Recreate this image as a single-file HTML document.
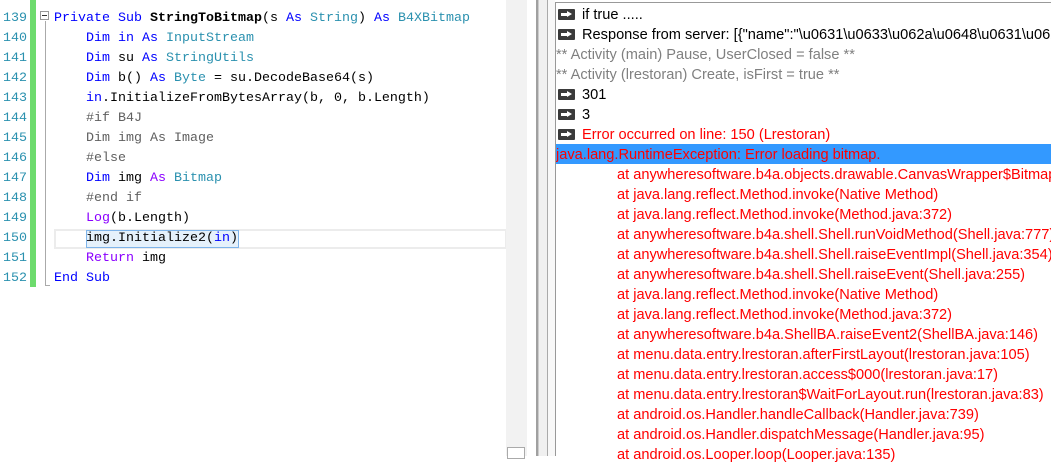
<!DOCTYPE html>
<html><head><style>
body{margin:0;width:1051px;height:456px;overflow:hidden;background:#fff;position:relative}
.ab{position:absolute}
.code{font-family:"Liberation Mono",monospace;font-size:13.33px;white-space:pre}
.ln{position:absolute;left:0;width:27px;text-align:right;color:#2b91af;font-family:"Liberation Mono",monospace;font-size:13.33px;line-height:20px}
.cl{position:absolute;left:54px;line-height:20px;color:#000}
.k{color:#0000ff}.t{color:#2b91af}.p{color:#8a00ff}.g{color:#606060}
.log{position:absolute;left:556px;right:0;font-family:"Liberation Sans",sans-serif;font-size:14.6px;line-height:20px;white-space:nowrap;overflow:hidden}
.lr{height:20px;position:relative;padding-top:1px;box-sizing:border-box}
.ic{position:absolute;left:2px;top:5px;width:17px;height:11px;background:#3a3a3a;border-radius:1px}
.ic:after{content:"";position:absolute;left:3px;top:4px;width:7px;height:3px;background:#fff}
.ic:before{content:"";position:absolute;left:9px;top:2px;border-left:5px solid #fff;border-top:3.5px solid transparent;border-bottom:3.5px solid transparent}
.tx{position:absolute;left:26px}
.red{color:#f00}.gr{color:#808080}
.st{position:absolute;left:61px;color:#f00}
</style></head><body>
<div class="ab" style="left:30px;top:0;width:6px;height:287px;background:#6ddb6d"></div>
<div class="ab" style="left:40px;top:11px;width:9px;height:9px;border:1px solid #999;box-sizing:border-box"></div>
<div class="ab" style="left:42px;top:15px;width:5px;height:1px;background:#333"></div>
<div class="ab" style="left:45px;top:21px;width:1px;height:265px;background:#aaa"></div>
<div class="ab" style="left:45px;top:285px;width:5px;height:1px;background:#aaa"></div>
<div class="ab" style="left:54px;top:229px;width:453px;height:20px;border:2px solid #ececec;box-sizing:border-box"></div>
<div class="ab" style="left:86px;top:230px;width:153px;height:18px;background:#e5f1fb;border:1px solid #7eb4ea;box-sizing:border-box"></div>
<div class="ln" style="top:9px">139<br>140<br>141<br>142<br>143<br>144<br>145<br>146<br>147<br>148<br>149<br>150<br>151<br>152</div>
<div class="code cl" style="top:9px"><span class="k">Private Sub</span> <b>StringToBitmap</b>(s <span class="k">As</span> <span class="t">String</span>) <span class="k">As</span> <span class="t">B4XBitmap</span>
    <span class="k">Dim</span> <span class="k">in</span> <span class="k">As</span> <span class="t">InputStream</span>
    <span class="k">Dim</span> su <span class="k">As</span> <span class="t">StringUtils</span>
    <span class="k">Dim</span> b() <span class="k">As</span> <span class="t">Byte</span> = su.DecodeBase64(s)
    <span class="k">in</span>.InitializeFromBytesArray(b, 0, b.Length)
<span class="g">    #if B4J
    Dim img As Image
    #else</span>
    <span class="k">Dim</span> img <span class="p">As</span> <span class="t">Bitmap</span>
<span class="g">    #end if</span>
    <span class="p">Log</span>(b.Length)
    img.Initialize2(<span class="k">in</span>)
    <span class="p">Return</span> img
<span class="k">End Sub</span></div>
<div class="ab" style="left:506px;top:0;width:21px;height:456px;background:#f2f2f2"></div>
<div class="ab" style="left:507px;top:447px;width:18px;height:12px;border:1px solid #aaa;background:#fff;box-sizing:border-box"></div>
<div class="ab" style="left:536px;top:0;width:2px;height:456px;background:#a0a0a0"></div>
<div class="ab" style="left:538px;top:0;width:9px;height:456px;background:#f0f0f0;border-left:1px solid #ccc;box-sizing:border-box"></div>
<div class="ab" style="left:547px;top:0;width:1px;height:456px;background:#aaa"></div>
<div class="ab" style="left:548px;top:0;width:7px;height:456px;background:#f8f8f8"></div>
<div class="ab" style="left:555px;top:2px;width:1px;height:454px;background:#999"></div>
<div class="ab" style="left:555px;top:2px;width:496px;height:1px;background:#999"></div>
<div class="log" style="top:4px">
<div class="lr"><span class="ic"></span><span class="tx">if true .....</span></div>
<div class="lr"><span class="ic"></span><span class="tx">Response from server: [{"name":"\u0631\u0633\u062a\u0648\u0631\u0627\u0646\u06cc"}]</span></div>
<div class="lr gr">** Activity (main) Pause, UserClosed = false **</div>
<div class="lr gr">** Activity (lrestoran) Create, isFirst = true **</div>
<div class="lr"><span class="ic"></span><span class="tx">301</span></div>
<div class="lr"><span class="ic"></span><span class="tx">3</span></div>
<div class="lr"><span class="ic"></span><span class="tx red">Error occurred on line: 150 (Lrestoran)</span></div>
<div class="lr red" style="background:#3399ff">java.lang.RuntimeException: Error loading bitmap.</div>
<div class="lr"><span class="st">at anywheresoftware.b4a.objects.drawable.CanvasWrapper$BitmapWrapper.Initialize2</span></div>
<div class="lr"><span class="st">at java.lang.reflect.Method.invoke(Native Method)</span></div>
<div class="lr"><span class="st">at java.lang.reflect.Method.invoke(Method.java:372)</span></div>
<div class="lr"><span class="st">at anywheresoftware.b4a.shell.Shell.runVoidMethod(Shell.java:777)</span></div>
<div class="lr"><span class="st">at anywheresoftware.b4a.shell.Shell.raiseEventImpl(Shell.java:354)</span></div>
<div class="lr"><span class="st">at anywheresoftware.b4a.shell.Shell.raiseEvent(Shell.java:255)</span></div>
<div class="lr"><span class="st">at java.lang.reflect.Method.invoke(Native Method)</span></div>
<div class="lr"><span class="st">at java.lang.reflect.Method.invoke(Method.java:372)</span></div>
<div class="lr"><span class="st">at anywheresoftware.b4a.ShellBA.raiseEvent2(ShellBA.java:146)</span></div>
<div class="lr"><span class="st">at menu.data.entry.lrestoran.afterFirstLayout(lrestoran.java:105)</span></div>
<div class="lr"><span class="st">at menu.data.entry.lrestoran.access$000(lrestoran.java:17)</span></div>
<div class="lr"><span class="st">at menu.data.entry.lrestoran$WaitForLayout.run(lrestoran.java:83)</span></div>
<div class="lr"><span class="st">at android.os.Handler.handleCallback(Handler.java:739)</span></div>
<div class="lr"><span class="st">at android.os.Handler.dispatchMessage(Handler.java:95)</span></div>
<div class="lr"><span class="st">at android.os.Looper.loop(Looper.java:135)</span></div>
</div>
</body></html>
